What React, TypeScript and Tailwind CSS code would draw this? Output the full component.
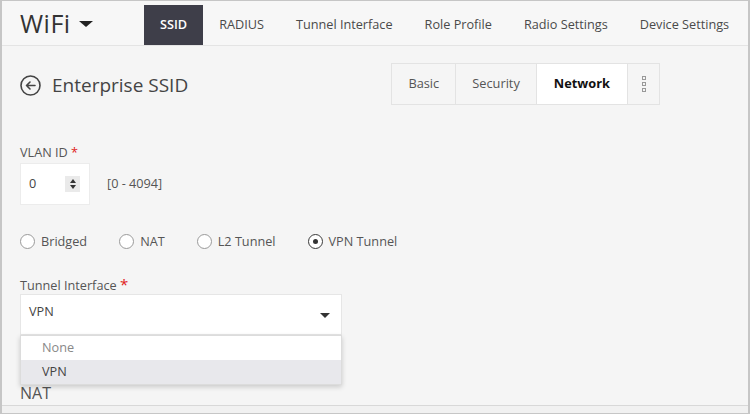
import React from "react";

function Radio({ label, checked = false }: { label: string; checked?: boolean }) {
  return (
    <div className="flex items-center mr-[32px]">
      <span
        className={
          "w-[15px] h-[15px] rounded-full border flex items-center justify-center bg-white " +
          (checked ? "border-[#3a3a3a]" : "border-[#9a9a9a]")
        }
      >
        {checked && <span className="w-[5px] h-[5px] rounded-full bg-[#333]" />}
      </span>
      <span className="ml-[6px] text-[12.7px] text-[#555] leading-[18px] whitespace-nowrap">{label}</span>
    </div>
  );
}

export default function App() {
  const navTabs = ["RADIUS", "Tunnel Interface", "Role Profile", "Radio Settings", "Device Settings"];
  return (
    <div className="w-[751px] h-[415px] bg-white overflow-hidden font-['Open_Sans',sans-serif]">
      <div className="w-[750px] h-[414px] border-l-2 border-t border-r-2 border-b border-[#c6c6c6] bg-[#f5f5f5] flex flex-col">
        {/* Header */}
        <div className="h-[45px] shrink-0 flex items-stretch border-b border-[#e4e4e4] bg-[#f7f7f7]">
          <div className="w-[142px] shrink-0 pl-[18px] flex items-center">
            <span className="text-[25px] text-[#333] leading-none tracking-[0.5px]">WiFi</span>
            <span className="ml-[8px] mt-[2px] w-0 h-0 border-l-[7px] border-r-[7px] border-t-[6px] border-l-transparent border-r-transparent border-t-[#222]" />
          </div>
          <div className="flex items-stretch pt-[4px] whitespace-nowrap">
            <div className="px-[16px] bg-[#3e3e49] text-white font-semibold text-[12.7px] flex items-center">SSID</div>
            {navTabs.map((t) => (
              <div key={t} className="px-[16px] text-[12.7px] text-[#4a4a4a] flex items-center">
                {t}
              </div>
            ))}
          </div>
        </div>

        {/* Content */}
        <div className="flex-1 pl-[18px] relative">
          {/* Title row */}
          <div className="mt-[17px] h-[41px] w-[640px] flex items-center">
            <svg width="21" height="21" viewBox="0 0 21 21" className="shrink-0 mt-[3px]">
              <circle cx="10.5" cy="10.5" r="9.5" fill="none" stroke="#444" strokeWidth="1.6" />
              <path d="M15 10.5H6.5M10 7l-3.5 3.5L10 14" fill="none" stroke="#444" strokeWidth="1.6" strokeLinecap="round" strokeLinejoin="round" />
            </svg>
            <span className="ml-[11px] mt-[3px] text-[19px] text-[#444] leading-none whitespace-nowrap">Enterprise SSID</span>
            <div className="ml-auto h-[42px] flex border border-[#e3e3e3] bg-[#f5f5f5]">
              <div className="px-[16px] flex items-center text-[12.8px] text-[#555] border-r border-[#e3e3e3]">Basic</div>
              <div className="px-[16px] flex items-center text-[12.8px] text-[#555] border-r border-[#e3e3e3]">Security</div>
              <div className="px-[17px] flex items-center text-[12.8px] text-[#111] font-bold bg-white border-r border-[#e3e3e3]">Network</div>
              <div className="w-[31px] flex flex-col items-center justify-center gap-[2px]">
                <span className="w-[4px] h-[4px] border border-[#999]" />
                <span className="w-[4px] h-[4px] border border-[#999]" />
                <span className="w-[4px] h-[4px] border border-[#999]" />
              </div>
            </div>
          </div>

          {/* VLAN ID */}
          <div className="mt-[39px] text-[12.7px] text-[#555] leading-[18px]">
            VLAN ID <span className="text-[#e02020]">*</span>
          </div>
          <div className="mt-[2px] flex items-center">
            <div className="w-[70px] h-[42px] bg-white border border-[#ececec] flex items-center pl-[8px] pr-[9px]">
              <span className="text-[12.7px] text-[#444]">0</span>
              <div className="ml-auto w-[15px] h-[16px] bg-[#eaeaea] flex flex-col items-center justify-center gap-[2px]">
                <span className="w-0 h-0 border-l-[3.5px] border-r-[3.5px] border-b-[4px] border-l-transparent border-r-transparent border-b-[#333]" />
                <span className="w-0 h-0 border-l-[3.5px] border-r-[3.5px] border-t-[4px] border-l-transparent border-r-transparent border-t-[#333]" />
              </div>
            </div>
            <span className="ml-[17px] text-[12.7px] text-[#555]">[0 - 4094]</span>
          </div>

          {/* Radios */}
          <div className="mt-[27px] flex items-center">
            <Radio label="Bridged" />
            <Radio label="NAT" />
            <Radio label="L2 Tunnel" />
            <Radio label="VPN Tunnel" checked />
          </div>

          {/* Tunnel Interface */}
          <div className="mt-[25px] text-[12.7px] text-[#555] leading-[18px]">
            Tunnel Interface <span className="text-[#e02020] text-[15px]">*</span>
          </div>
          <div className="relative mt-0 w-[322px]">
            <div className="h-[41px] bg-white border border-[#e6e6e6] flex pl-[8px] pr-[11px]">
              <span className="mt-[7px] text-[12.7px] text-[#444] leading-[18px]">VPN</span>
              <span className="ml-auto mt-[18px] w-0 h-0 border-l-[5px] border-r-[5px] border-t-[5px] border-l-transparent border-r-transparent border-t-[#333]" />
            </div>
            <div className="h-[48px]" />
            <div className="text-[16px] text-[#555] leading-[20px]">NAT</div>

            {/* Dropdown overlay */}
            <div className="absolute left-0 top-[41px] w-[322px] bg-white border border-[#dcdcdc] shadow-[0_2px_5px_rgba(0,0,0,0.18)]">
              <div className="h-[24px] pl-[21px] flex items-center text-[12.7px] text-[#888]">None</div>
              <div className="h-[24px] pl-[21px] flex items-center text-[12.7px] text-[#444] bg-[#e8e8ec]">VPN</div>
            </div>
          </div>

          {/* bottom strip */}
          <div className="absolute left-0 right-0 bottom-0 h-[8px] border-t border-[#d8d8d8] bg-[#f1f1f1]" />
        </div>
      </div>
    </div>
  );
}
